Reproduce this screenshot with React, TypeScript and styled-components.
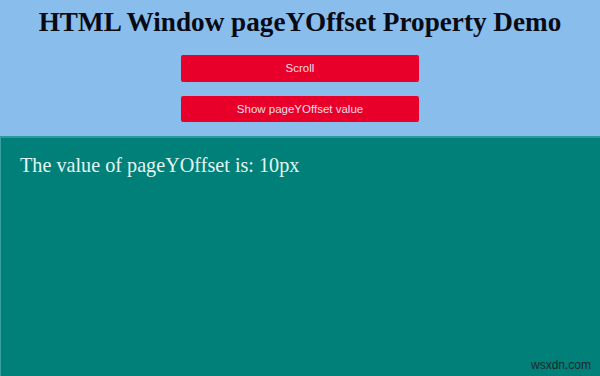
import styled, { createGlobalStyle } from 'styled-components';

const GlobalStyle = createGlobalStyle`
  html, body {
    margin: 0;
    padding: 0;
    height: 100%;
  }
  body {
    background: #88bdec;
    overflow: hidden;
  }
`;

const Page = styled.div`
  width: 600px;
  height: 376px;
  display: flex;
  flex-direction: column;
  background: #88bdec;
`;

const Header = styled.div`
  display: flex;
  flex-direction: column;
  align-items: center;
  padding-top: 7px;
  height: 136px;
  box-sizing: border-box;
`;

const Title = styled.h1`
  margin: 0 0 18px;
  font-family: 'Liberation Serif', 'Times New Roman', serif;
  font-size: 27.2px;
  font-weight: bold;
  color: #0a0a14;
  line-height: 30px;
`;

const Button = styled.button`
  width: 238px;
  height: 27px;
  margin-bottom: 14px;
  border: none;
  border-radius: 2px;
  background: #e8002b;
  color: #f6dde2;
  font-family: 'Liberation Sans', Arial, sans-serif;
  font-size: 11.5px;
  cursor: pointer;
`;

const Output = styled.div`
  position: relative;
  flex: 1;
  background: #008079;
  border-top: 2px solid #2a9a9a;
  border-left: 1px solid #3aa0a6;
  padding: 16px 19px;
`;

const Message = styled.p`
  margin: 0;
  font-family: 'Liberation Serif', 'Times New Roman', serif;
  font-size: 20.2px;
  color: #e2f6f2;
`;

const Watermark = styled.span`
  position: absolute;
  right: 9px;
  bottom: 4px;
  font-family: 'Liberation Sans', Arial, sans-serif;
  font-size: 12px;
  color: #1a2a2a;
`;

export default function App() {
  return (
    <Page>
      <GlobalStyle />
      <Header>
        <Title>HTML Window pageYOffset Property Demo</Title>
        <Button>Scroll</Button>
        <Button>Show pageYOffset value</Button>
      </Header>
      <Output>
        <Message>The value of pageYOffset is: 10px</Message>
        <Watermark>wsxdn.com</Watermark>
      </Output>
    </Page>
  );
}
